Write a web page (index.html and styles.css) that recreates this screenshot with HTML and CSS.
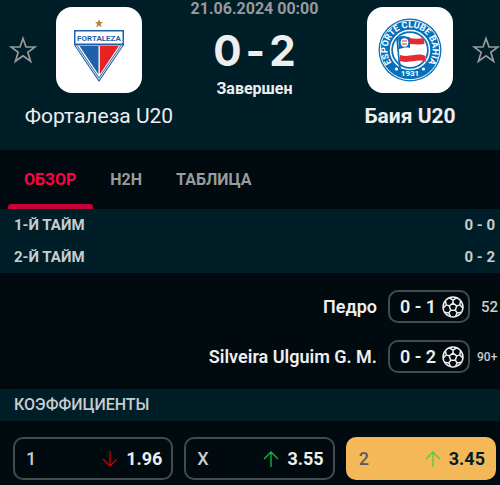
FILE: index.html
```html
<!DOCTYPE html>
<html lang="ru">
<head>
    <meta charset="UTF-8">
    <meta name="viewport" content="width=device-width, initial-scale=1.0">
    <title>Форталеза U20 - Баия U20</title>
    <link rel="stylesheet" href="styles.css">
</head>
<body>
    <!-- Shared icons -->
    <svg class="sprite" aria-hidden="true">
        <symbol id="star" viewBox="0 0 28 28">
            <path d="M14 2.5L17 11H26L18.8 16.3L21.6 25.3L14 19.8L6.4 25.3L9.2 16.3L2 11H11Z" fill="none" stroke="currentColor" stroke-width="1.7"/>
        </symbol>
        <symbol id="ball" viewBox="0 0 22 22">
            <g fill="none" stroke="currentColor" stroke-width="1.5" stroke-linejoin="round">
                <circle cx="11" cy="11" r="10"/>
                <path d="M11 7.2L14.7 9.9L13.3 14.2H8.7L7.3 9.9Z"/>
                <path d="M11 7.2V4L7.2 1.8M11 4L14.8 1.8M14.7 9.9L17.8 8.9L18.6 4.6M17.8 8.9L20.8 12M13.3 14.2L15.2 16.9L19.4 16.2M15.2 16.9L13.4 20.6M8.7 14.2L6.8 16.9L2.6 16.2M6.8 16.9L8.6 20.6M7.3 9.9L4.2 8.9L3.4 4.6M4.2 8.9L1.2 12"/>
            </g>
        </symbol>
        <symbol id="arrow" viewBox="0 0 16 18">
            <path d="M8 17V2M1 9L8 2L15 9" fill="none" stroke="currentColor" stroke-width="1.3"/>
        </symbol>
    </svg>

    <!-- Match header -->
    <header class="match">
        <div class="team">
            <button class="fav" aria-label="В избранное"><svg><use href="#star"/></svg></button>
            <div class="crest">
                <svg viewBox="0 0 86 86">
                    <path d="M43 12L44.2 15H47L44.8 17.1L45.8 20.5L43 18.5L40.2 20.5L41.2 17.1L39 15H41.8Z" fill="#b98545"/>
                    <path d="M18 23H68V38L43 75L18 38Z" fill="#1f61a8"/>
                    <path d="M19.5 38.5H66.5L43 73Z" fill="#fff"/>
                    <path d="M20.8 39H65.2L43 71.7Z" fill="#1f61a8"/>
                    <path d="M21.8 39H64.2L43 70.2Z" fill="#fff"/>
                    <path d="M23.5 39H42.5V67.5Z" fill="#1f61a8"/>
                    <path d="M43.8 39H62.8L43.8 67.5Z" fill="#e62320"/>
                    <path d="M19.5 24.5H66.5V36.5H19.5Z" fill="#fff"/>
                    <text class="fortaleza" x="43" y="33.5" text-anchor="middle">FORTALEZA</text>
                </svg>
            </div>
            <h2>Форталеза U20</h2>
        </div>

        <div class="result">
            <time>21.06.2024 00:00</time>
            <div class="score"><span>0</span><span>-</span><span>2</span></div>
            <div class="status">Завершен</div>
        </div>

        <div class="team winner">
            <div class="crest">
                <svg viewBox="0 0 86 86">
                    <circle cx="43" cy="43" r="31.5" fill="#0870bb"/>
                    <circle cx="43" cy="43" r="29.7" fill="none" stroke="#fff" stroke-width="1"/>
                    <circle cx="43" cy="43" r="19.5" fill="#0870bb" stroke="#fff" stroke-width="1.5"/>
                    <circle cx="43" cy="43" r="17" fill="#fff"/>
                    <path id="ring" d="M27.1 58.9A22.5 22.5 0 1 1 58.9 58.9" fill="none"/>
                    <text class="bahia"><textPath href="#ring" startOffset="50%" text-anchor="middle">ESPORTE CLUBE BAHIA</textPath></text>
                    <path d="M30 30L33 62" stroke="#0870bb" stroke-width="2"/>
                    <path d="M31 30C39 26 47 34 57 31L59 55C51 51 43 57 33 54Z" fill="#fff"/>
                    <path d="M42 31C47 32 52 32 57 31L57.4 37C52 38 47 37 42 37Z" fill="#e62a32"/>
                    <path d="M33 48C43 51 50 45 58.5 49L59 55C51 51 43 57 33 54Z" fill="#e62a32"/>
                    <path d="M31 30C35 28 39 29 43 30.5V41C39 40 36 41 32 42Z" fill="#0870bb"/>
                    <ellipse cx="37.5" cy="35.5" rx="3.8" ry="4.2" fill="#fff"/>
                    <path d="M35 34H40M35 37H40" stroke="#e62a32" stroke-width="1.2"/>
                    <circle cx="29.5" cy="62" r="1.6" fill="#fff"/>
                    <circle cx="56.5" cy="62" r="1.6" fill="#fff"/>
                    <text class="bahia year" x="43" y="69" text-anchor="middle">1931</text>
                </svg>
            </div>
            <button class="fav" aria-label="В избранное"><svg><use href="#star"/></svg></button>
            <h2>Баия U20</h2>
        </div>
    </header>

    <nav class="tabs">
        <a href="#" class="active">ОБЗОР</a>
        <a href="#">H2H</a>
        <a href="#">ТАБЛИЦА</a>
    </nav>

    <!-- Halves -->
    <section class="halves">
        <div class="bar"><span>1-Й ТАЙМ</span><span>0 - 0</span></div>
        <div class="bar"><span>2-Й ТАЙМ</span><span>0 - 2</span></div>
    </section>

    <!-- Goals -->
    <section class="goals">
        <div class="goal">
            <span>Педро</span>
            <div class="goal-score">0 - 1 <svg><use href="#ball"/></svg></div>
            <span class="minute">52</span>
        </div>
        <div class="goal">
            <span>Silveira Ulguim G. M.</span>
            <div class="goal-score">0 - 2 <svg><use href="#ball"/></svg></div>
            <span class="minute extra">90+</span>
        </div>
    </section>

    <!-- Odds -->
    <div class="bar">КОЭФФИЦИЕНТЫ</div>
    <section class="odds">
        <button class="odd"><span>1</span><svg class="down"><use href="#arrow"/></svg><b>1.96</b></button>
        <button class="odd"><span>X</span><svg><use href="#arrow"/></svg><b>3.55</b></button>
        <button class="odd win"><span>2</span><svg><use href="#arrow"/></svg><b>3.45</b></button>
    </section>
</body>
</html>
```
FILE: styles.css
```css
* {
    box-sizing: border-box;
}
body {
    margin: 0;
    background-color: #010a0f;
    color: #eee;
    font-family: Roboto, sans-serif;
    font-size: 16px;
    overflow-x: hidden;
}
button {
    font: inherit;
    color: inherit;
    background: none;
    border: none;
    padding: 0;
    cursor: pointer;
}
.sprite {
    display: none;
}

/* Match header */
.match {
    display: grid;
    grid-template-columns: 180px 1fr 180px;
    padding: 7px 0 20px 9px;
    background-color: #001e28;
}
.team {
    display: grid;
    grid-template-columns: 1fr 86px 1fr;
    align-items: center;
}
.crest {
    grid-column: 2;
    height: 86px;
    border-radius: 16px;
    background-color: #fff;
}
.crest svg {
    display: block;
    width: 86px;
    height: 86px;
}
.fortaleza {
    font: bold 8px Roboto, sans-serif;
    fill: #1f61a8;
}
.bahia {
    font: bold 9px Roboto, sans-serif;
    fill: #fff;
}
.year {
    font-size: 8px;
}
.fav {
    width: 28px;
    height: 28px;
    color: #999;
}
.fav svg {
    display: block;
    width: 28px;
    height: 28px;
}
.winner .fav {
    justify-self: end;
}
.team h2 {
    grid-column: 1 / 4;
    margin: 9px 0 0;
    font-size: 21px;
    font-weight: 400;
    line-height: 28px;
    text-align: center;
}
.team.winner h2 {
    font-weight: 700;
}
.result {
    text-align: center;
    white-space: nowrap;
}
.result time {
    display: block;
    color: #999;
    font-size: 16px;
    font-weight: 700;
    line-height: 4px;
}
.score {
    display: flex;
    justify-content: center;
    gap: 4px;
    margin-top: 16px;
    font-family: Inter, sans-serif;
    font-size: 42px;
    font-weight: 700;
    line-height: 48px;
}
.status {
    margin-top: 4px;
    font-size: 16px;
    font-weight: 700;
    line-height: 20px;
}

/* Tabs */
.tabs {
    display: flex;
    gap: 1px;
    padding: 0 8px;
}
.tabs a {
    padding: 5px 17px 0 16px;
    color: #999b9d;
    font-weight: 700;
    line-height: 49px;
    text-decoration: none;
}
.tabs a::after {
    content: "";
    display: block;
    height: 5px;
    margin: 0 -17px 0 -16px;
    border-radius: 3px 3px 0 0;
}
.tabs .active {
    color: #ff0046;
}
.tabs .active::after {
    background-color: #c80037;
}

/* Section bars */
.bar {
    display: flex;
    justify-content: space-between;
    padding: 0 5px 0 14px;
    background-color: #001e28;
    color: #c8cdcd;
    font-weight: 500;
    line-height: 32px;
}
.halves .bar {
    font-size: 15px;
    font-weight: 700;
}

/* Goals */
.goals {
    display: flex;
    flex-direction: column;
    gap: 17px;
    padding: 17px 0 16px;
}
.goal {
    display: flex;
    justify-content: flex-end;
    align-items: center;
    gap: 11px;
    font-size: 18px;
    font-weight: 600;
}
.goal-score {
    display: flex;
    justify-content: space-between;
    align-items: center;
    width: 82px;
    height: 33px;
    padding: 0 4px 0 10px;
    border: 2px solid #444b4f;
    border-radius: 10px;
}
.goal-score svg {
    width: 22px;
    height: 22px;
}
.minute {
    width: 19px;
    color: #c8cdcd;
    font-size: 15px;
    font-weight: 500;
}
.extra {
    margin-left: -4px;
    width: 23px;
    font-size: 12px;
}

/* Odds */
.odds {
    display: grid;
    grid-template-columns: 16fr 15fr 15fr;
    gap: 11px;
    padding: 16px 4px 5px 13px;
}
.odd {
    display: flex;
    align-items: center;
    height: 43px;
    padding: 0 9px 0 11px;
    border: 2px solid #444b4f;
    border-radius: 10px;
    font-size: 18px;
}
.odd span {
    flex: 1;
    color: #c8cdcd;
    font-weight: 500;
    text-align: left;
}
.odd svg {
    width: 16px;
    height: 18px;
    margin-right: 8px;
    color: #0fbd46;
}
.odd .down {
    color: #c80000;
    transform: rotate(180deg);
}
.odd b {
    font-weight: 700;
}
.odd.win {
    background-color: #f5b858;
    border-color: #f5b858;
}
.win span {
    color: #555e5d;
}
.win svg {
    color: #46d246;
}
.win b {
    color: #001e28;
}
```
